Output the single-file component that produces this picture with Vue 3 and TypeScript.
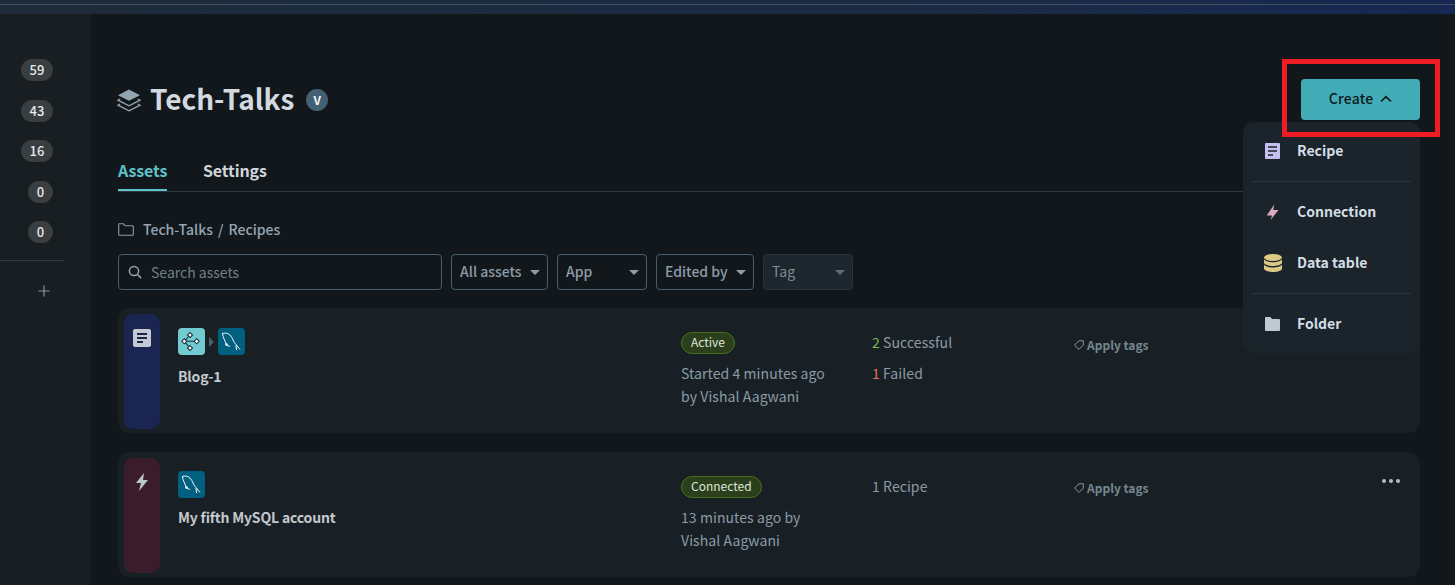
<script setup lang="ts">
const counts: { value: string; wide: boolean }[] = [
  { value: '59', wide: true },
  { value: '43', wide: true },
  { value: '16', wide: true },
  { value: '0', wide: false },
  { value: '0', wide: false },
]
const filters: { label: string; width: number; muted?: boolean }[] = [
  { label: 'All assets', width: 97 },
  { label: 'App', width: 90 },
  { label: 'Edited by', width: 98 },
  { label: 'Tag', width: 90, muted: true },
]
</script>

<template>
  <div class="app">
    <div class="topbar"></div>
    <div class="layout">
      <aside class="sidebar">
        <div class="counts">
          <span v-for="(c, i) in counts" :key="i" class="count" :class="{ wide: c.wide }">{{ c.value }}</span>
        </div>
        <div class="side-divider"></div>
        <svg class="plus" width="12" height="12" viewBox="0 0 12 12"><path d="M6 .5v11M.5 6h11" stroke="#8b969d" stroke-width="1.2" fill="none" /></svg>
      </aside>
      <main class="main">
        <header class="head">
          <svg class="stack" width="24" height="24" viewBox="0 0 24 24">
            <path d="M12 1.5 23 7.2 12 12.8 1 7.2Z" fill="#93a5b1" />
            <path d="M3.2 11 1 12.2l11 5.6 11-5.6-2.2-1.2" fill="none" stroke="#93a5b1" stroke-width="1.3" />
            <path d="M3.2 16 1 17.2 12 22.8l11-5.6L20.8 16" fill="none" stroke="#93a5b1" stroke-width="1.3" />
          </svg>
          <h1>Tech-Talks</h1>
          <span class="v">V</span>
          <button class="create">Create
            <svg width="12" height="8" viewBox="0 0 12 8"><path d="M1 6.5 6 1.7l5 4.8" fill="none" stroke="#10171b" stroke-width="1.7" /></svg>
          </button>
        </header>

        <nav class="tabs">
          <span class="tab active">Assets</span>
          <span class="tab">Settings</span>
        </nav>

        <div class="crumb">
          <svg width="16" height="13" viewBox="0 0 16 13"><path d="M.7 1.5Q.7.7 1.5.7h4l1.5 2h7.5q.8 0 .8.8v8q0 .8-.8.8h-13q-.8 0-.8-.8Z" fill="none" stroke="#8c9ca7" stroke-width="1.1" /></svg>
          <span>Tech-Talks<span class="slash">/</span>Recipes</span>
        </div>

        <div class="filters">
          <div class="search">
            <svg width="14" height="14" viewBox="0 0 14 14"><circle cx="6" cy="6" r="4.6" fill="none" stroke="#96a5af" stroke-width="1.5" /><path d="m9.5 9.5 3.6 3.6" stroke="#96a5af" stroke-width="1.6" /></svg>
            <span>Search assets</span>
          </div>
          <div v-for="f in filters" :key="f.label" class="select" :class="{ muted: f.muted }" :style="{ width: f.width + 'px' }">
            <span>{{ f.label }}</span>
            <i class="caret"></i>
          </div>
        </div>

        <section class="card">
          <div class="strip blue">
            <svg width="18" height="18" viewBox="0 0 18 18"><rect width="18" height="18" rx="2" fill="#c3cad1" /><path d="M4 5h10M4 9h10M4 13h6" stroke="#1b2552" stroke-width="2" /></svg>
          </div>
          <div class="col name">
            <div class="icons">
              <span class="tile teal">
                <svg width="27" height="27" viewBox="0 0 27 27">
                  <path d="M6.3 13.3h12.4M6.3 13.3 12 7M6.3 13.3 12 20" stroke="#16323a" stroke-width="1.1" fill="none" />
                  <g fill="#f2f7f7" stroke="#16323a" stroke-width="1">
                    <rect x="10.2" y="5.2" width="3.6" height="3.6" transform="rotate(45 12 7)" />
                    <rect x="10.2" y="18.2" width="3.6" height="3.6" transform="rotate(45 12 20)" />
                    <rect x="4.5" y="11.5" width="3.6" height="3.6" transform="rotate(45 6.3 13.3)" />
                    <rect x="16.9" y="11.5" width="3.6" height="3.6" transform="rotate(45 18.7 13.3)" />
                  </g>
                </svg>
              </span>
              <i class="arrow"></i>
              <span class="tile mysql">
                <svg width="27" height="27" viewBox="0 0 27 27"><path d="M4 5.500c3-.8 6-.5 8 1.500 3 3 3 7 6 9.500l4 5M4.500 6c.5 3 2.500 7 4 11l3.500 1.500M18 17l.5 5" fill="none" stroke="#f3f7f9" stroke-width="1" /><circle cx="8.500" cy="16.500" r="1.300" fill="#f3f7f9" /></svg>
              </span>
            </div>
            <div class="title">Blog-1</div>
          </div>
          <div class="col status">
            <span class="badge">Active</span>
            <p>Started 4 minutes ago<br />by Vishal Aagwani</p>
          </div>
          <div class="col stats">
            <p><b class="ok">2</b> Successful</p>
            <p class="second"><b class="fail">1</b> Failed</p>
          </div>
          <div class="col tags">
            <svg width="10" height="10" viewBox="0 0 10 10"><path d="M.6 5 5 .8h4.300v4.300L5 9.400Z" fill="none" stroke="#98a5ad" stroke-width=".9" /></svg>
            <span>Apply tags</span>
          </div>
        </section>

        <section class="card second-card">
          <div class="strip maroon">
            <svg width="14" height="18" viewBox="0 0 14 18"><path d="M9 0 1 10h5l-2 8 9-11H8Z" fill="#bec6cd" /></svg>
          </div>
          <div class="col name">
            <div class="icons">
              <span class="tile mysql">
                <svg width="27" height="27" viewBox="0 0 27 27"><path d="M4 5.500c3-.8 6-.5 8 1.500 3 3 3 7 6 9.500l4 5M4.500 6c.5 3 2.500 7 4 11l3.500 1.500M18 17l.5 5" fill="none" stroke="#f3f7f9" stroke-width="1" /><circle cx="8.500" cy="16.500" r="1.300" fill="#f3f7f9" /></svg>
              </span>
            </div>
            <div class="title">My fifth MySQL account</div>
          </div>
          <div class="col status">
            <span class="badge">Connected</span>
            <p>13 minutes ago by<br />Vishal Aagwani</p>
          </div>
          <div class="col stats">
            <p>1 Recipe</p>
          </div>
          <div class="col tags">
            <svg width="10" height="10" viewBox="0 0 10 10"><path d="M.6 5 5 .8h4.300v4.300L5 9.400Z" fill="none" stroke="#98a5ad" stroke-width=".9" /></svg>
            <span>Apply tags</span>
          </div>
          <div class="more"><i></i><i></i><i></i></div>
        </section>

        <div class="menu">
          <div class="item recipe">
            <svg width="15" height="16" viewBox="0 0 15 16"><rect width="15" height="16" rx="1" fill="#c5c0ef" /><path d="M3 4h9M3 8h9M3 12h5" stroke="#1b242b" stroke-width="1.5" /></svg>
            <span>Recipe</span>
          </div>
          <hr />
          <div class="item conn">
            <svg width="15" height="18" viewBox="0 0 15 18"><path d="M9.300 2.500 1.800 13.500h5.200L5.500 18l8-10H8.200Z" fill="#dfa8c3" /></svg>
            <span>Connection</span>
          </div>
          <div class="item table">
            <svg width="18" height="18" viewBox="0 0 18 18"><ellipse cx="9" cy="3.500" rx="9" ry="3.500" fill="#dcc986" /><path d="M0 5.200c1 2 5 3 9 3s8-1 9-3V9c-1 2-5 3-9 3S1 11 0 9Z" fill="#dcc986" /><path d="M0 10.500c1 2 5 3 9 3s8-1 9-3v4c0 2-4 3.500-9 3.500s-9-1.500-9-3.500Z" fill="#dcc986" /></svg>
            <span>Data table</span>
          </div>
          <hr />
          <div class="item folder">
            <svg width="15" height="14" viewBox="0 0 15 14"><path d="M0 1q0-1 1-1h4.500l1.500 2h7q1 0 1 1v10q0 1-1 1H1q-1 0-1-1Z" fill="#c0c9d1" /></svg>
            <span>Folder</span>
          </div>
        </div>
        <div class="highlight"></div>
      </main>
    </div>
  </div>
</template>

<style>
html, body { margin: 0; background: #12171b; overflow: hidden; }
</style>

<style scoped>
.app { width: 1455px; height: 585px; overflow: hidden; display: flex; flex-direction: column; font-family: "Noto Sans CJK SC", "Noto Sans", sans-serif; background: #12171b; color: #c5ced5; }
.topbar { height: 14px; flex: none; background: linear-gradient(to bottom, transparent 4px, #3f4f5d 4px 5px, transparent 5px), linear-gradient(to right, #1d2b3a, #1b2b45 65%, #162853); }
.layout { flex: 1; display: flex; min-height: 0; }
.sidebar { width: 91px; flex: none; background: #181e22; box-sizing: border-box; padding-top: 45px; }
.counts { width: 53px; display: flex; flex-direction: column; align-items: flex-end; gap: 18.5px; }
.count { height: 22px; width: 25px; border-radius: 11px; background: #393e41; color: #e7eaec; font-size: 13px; font-weight: 500; line-height: 21px; text-align: center; }
.count.wide { width: 32px; }
.side-divider { width: 64px; height: 1px; background: #30383d; margin-top: 17px; }
.plus { display: block; margin: 24px 0 0 38px; }
.main { flex: 1; position: relative; box-sizing: border-box; padding: 0 35px 0 27px; min-width: 0; }
.head { display: flex; align-items: center; height: 41px; margin-top: 65px; position: relative; }
.stack { margin: 0 9px 0 -1px; }
h1 { margin: 0; font-size: 28px; line-height: 39px; font-weight: 700; color: #d2dae0; padding-bottom: 2px; }
.v { width: 22px; height: 22px; border-radius: 50%; background: #446073; color: #f0f4f6; font-size: 12px; font-weight: 700; line-height: 21px; text-align: center; margin-left: 12px; }
.create { margin-left: auto; width: 119px; height: 41px; border: 0; border-radius: 4px; background: #42adb6; color: #10171b; font: 500 14px/39px "Noto Sans CJK SC", sans-serif; letter-spacing: .2px; display: flex; align-items: center; justify-content: center; gap: 7px; padding: 0 0 2px; }
.tabs { display: flex; gap: 36px; margin-top: 37px; height: 34px; border-bottom: 1px solid #30393f; }
.tab { font-size: 16px; font-weight: 600; letter-spacing: -.12px; line-height: 27px; color: #cfd6db; box-sizing: border-box; height: 34px; }
.tab.active { color: #5fc1c9; border-bottom: 2px solid #5fc1c9; width: 49px; }
.crumb { display: flex; align-items: center; gap: 9px; height: 20px; margin-top: 27px; font-size: 14px; font-weight: 500; color: #94a6b3; }
.slash { margin: 0 5px; }
.filters { display: flex; gap: 9px; margin-top: 15px; height: 36px; }
.search { width: 324px; box-sizing: border-box; border: 1px solid #47606f; border-radius: 4px; display: flex; align-items: center; gap: 9px; padding: 0 0 1px 9px; color: #6f8089; font-size: 14px; }
.select { box-sizing: border-box; border: 1px solid #47606f; border-radius: 4px; display: flex; align-items: center; justify-content: space-between; padding: 0 7px 2px 8px; font-size: 14px; font-weight: 500; color: #8d9ca6; }
.select.muted { border-color: #2b363d; background: #1e272e; color: #7f8c94; font-weight: 400; }
.caret { width: 0; height: 0; border-left: 5px solid transparent; border-right: 5px solid transparent; border-top: 5px solid #8d9ca6; margin-top: 3px; }
.muted .caret { border-top-color: #5f6c74; }
.card { height: 125px; margin-top: 18px; background: #192025; border-radius: 12px; display: flex; box-sizing: border-box; padding: 6px; position: relative; }
.second-card { margin-top: 19px; }
.strip { width: 36px; height: 115px; flex: none; border-radius: 9px; display: flex; justify-content: center; padding-top: 15px; box-sizing: border-box; }
.blue { background: #1b2552; }
.maroon { background: #3b1c2b; }
.col { position: absolute; top: 20px; }
.name { left: 60px; }
.second-card .name { top: 19px; }
.icons { display: flex; align-items: center; height: 27px; }
.tile { width: 27px; height: 27px; border-radius: 4px; display: flex; align-items: center; justify-content: center; }
.teal { background: #72cbd0; }
.mysql { background: #01607f; }
.arrow { width: 0; height: 0; margin: 0 3.5px 0 4px; border-top: 5px solid transparent; border-bottom: 5px solid transparent; border-left: 5.5px solid #4a5f6e; }
.title { margin-top: 11px; font-size: 14px; font-weight: 600; letter-spacing: -.18px; line-height: 20px; color: #c3c9cd; white-space: nowrap; }
.second-card .title { margin-top: 9px; }
.status { left: 563px; top: 24px; display: flex; flex-direction: column; align-items: flex-start; }
.badge { box-sizing: border-box; height: 22px; line-height: 18px; padding: 0 9px; border: 1px solid #44701e; background: #2c3f1c; border-radius: 11px; font-size: 12px; color: #dde4da; }
.status p { margin: 8px 0 0; font-size: 14px; letter-spacing: .08px; line-height: 23px; color: #8b9ba5; white-space: nowrap; }
.stats { left: 754px; top: 23px; font-size: 14px; letter-spacing: .08px; color: #8b9ba5; line-height: 22px; }
.stats p { margin: 0; white-space: nowrap; }
.stats .second { margin-top: 9px; }
.stats b { font-weight: 400; }
.ok { color: #79b94a; }
.fail { color: #ec6f5f; }
.tags { left: 956px; top: 27px; display: flex; align-items: center; gap: 3px; font-size: 12px; font-weight: 700; color: #75868f; line-height: 20px; }
.second-card .tags { top: 26px; }
.more { position: absolute; right: 20px; top: 27px; display: flex; gap: 3px; }
.more i { width: 4px; height: 4px; border-radius: 50%; background: #b4bdc4; }
.menu { position: absolute; left: 1152px; top: 108px; width: 177px; height: 231px; background: #1b242a; border-radius: 10px; box-sizing: border-box; padding: 0 9px; z-index: 2; }
.menu hr { border: 0; height: 1px; background: #2a363c; margin: 0; }
.item { display: flex; align-items: center; height: 51px; font-size: 14px; font-weight: 600; color: #d3dde5; position: relative; padding-left: 45px; box-sizing: border-box; }
.item svg { position: absolute; left: 13px; top: 50%; transform: translateY(-50%); }
.recipe { height: 59px; align-items: flex-start; padding-top: 18px; }
.recipe svg { top: 29px; }
.conn { height: 60px; padding-bottom: 2px; }
.conn svg { top: 29px; }
.table { height: 51px; padding-bottom: 11px; }
.table svg { left: 12px; top: 21px; }
.item.folder { height: 59px; padding-bottom: 2px; }
.highlight { position: absolute; left: 1191px; top: 45px; width: 158px; height: 78px; box-sizing: border-box; border: 5px solid #ee1c25; pointer-events: none; z-index: 3; }
</style>
